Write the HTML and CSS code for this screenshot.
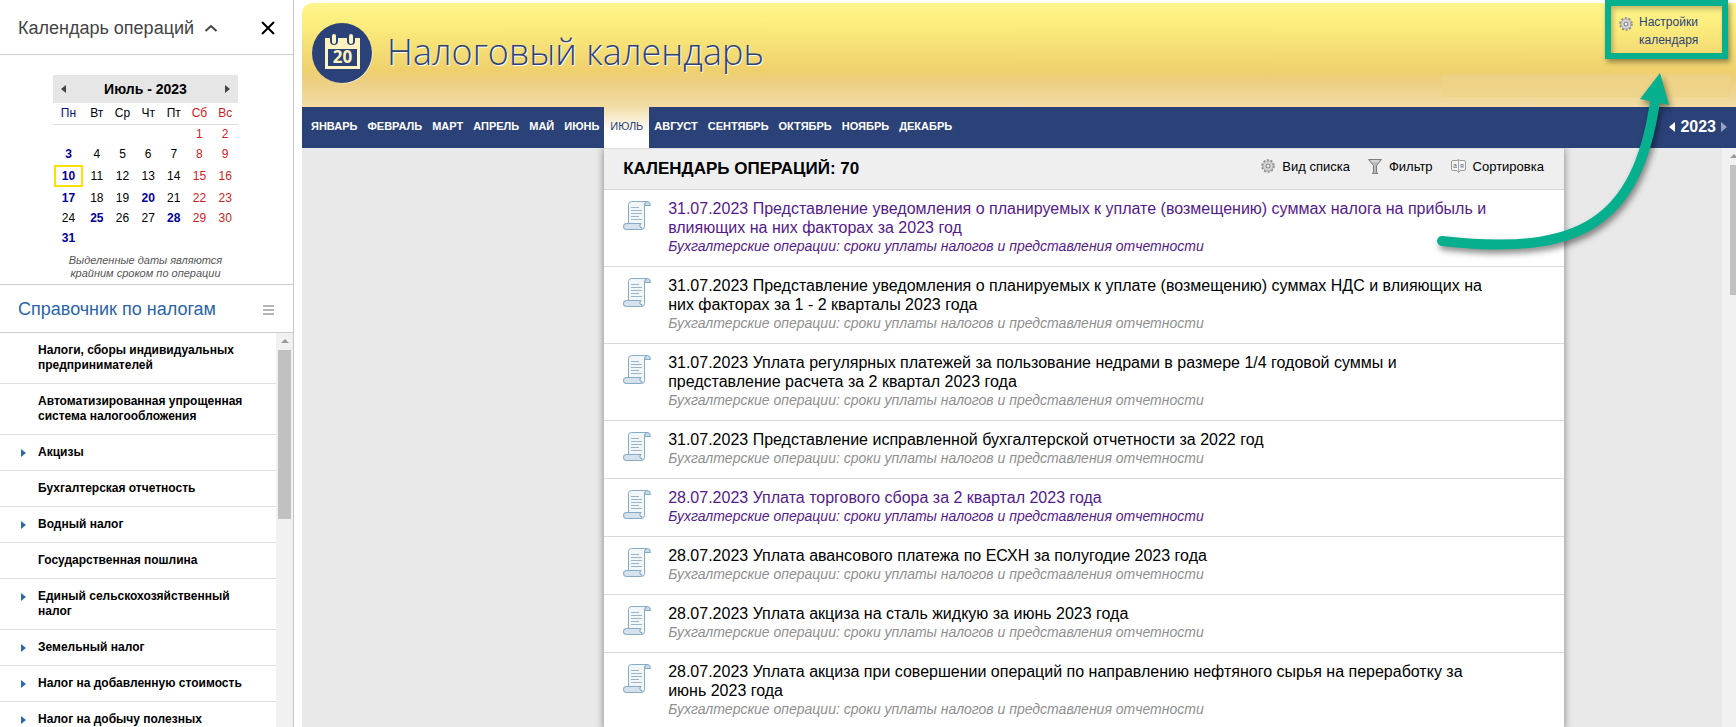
FILE: index.html
```html
<!DOCTYPE html>
<html lang="ru">
<head>
<meta charset="utf-8">
<title>Налоговый календарь</title>
<link rel="stylesheet" href="styles.css">
</head>
<body>
<svg class="defs" aria-hidden="true">
  <symbol id="scroll" viewBox="0 0 28 29">
    <path d="M5.500 22V3.500Q5.500.5 8.500.5H24.500Q21.500 1 21.500 4V25.500Q21.500 28.500 18.500 28.500H3.500Q.5 28.500.5 25.500 .5 22.500 3.500 22.500H18Q16 24 17 25.500" fill="#f2f6f9" stroke="#86abc4"/>
    <path d="M22 4.500H27.500Q27.500.5 24.500.5 21.500.5 21.500 4.500Z" fill="#c9dae6" stroke="#86abc4"/>
    <path d="M3.500 22.500H18Q15.500 24 17.500 26.500H19Q19 28.500 17.500 28.500H3.500Q.5 28.500.5 25.500T3.500 22.500Z" fill="#d5e2eb" stroke="#86abc4"/>
    <path d="M8 6.500H16M8 9.500H19M8 12.500H19M8 15.500H16M8 18.500H19" stroke="#9cb6c8"/>
  </symbol>
  <symbol id="gear" viewBox="0 0 14 14">
    <circle cx="7" cy="7" r="5.800" fill="#d8d8d8" stroke="#8b8b8b" stroke-width="2" stroke-dasharray="2 1.640"/>
    <circle cx="7" cy="7" r="5" fill="#d6d6d6" stroke="#a5a5a5" stroke-width=".8"/>
    <circle cx="7" cy="7" r="2" fill="#f4f4f4" stroke="#777"/>
  </symbol>
</svg>
<div class="app">
  <aside class="side">
    <header class="side-head">
      <button class="side-title" type="button">Календарь операций
        <svg width="14" height="8" viewBox="0 0 14 8"><path d="M1.500 7 7 2 12.500 7" fill="none" stroke="#444" stroke-width="2"/></svg>
      </button>
      <button class="icon-btn" type="button" aria-label="Закрыть"><svg width="14" height="14" viewBox="0 0 14 14"><path d="M1 1 13 13M13 1 1 13" stroke="#000" stroke-width="2"/></svg></button>
    </header>
    <section class="cal">
      <div class="cal-head">
        <button class="icon-btn" type="button" aria-label="Предыдущий месяц"><svg width="5" height="8"><path d="M5 0V8L0 4Z" fill="#444"/></svg></button>
        <strong>Июль - 2023</strong>
        <button class="icon-btn" type="button" aria-label="Следующий месяц"><svg width="5" height="8"><path d="M0 0V8L5 4Z" fill="#444"/></svg></button>
      </div>
      <table class="days">
        <thead><tr><th class="mon">Пн</th><th>Вт</th><th>Ср</th><th>Чт</th><th>Пт</th><th>Сб</th><th>Вс</th></tr></thead>
        <tbody>
          <tr><td></td><td></td><td></td><td></td><td></td><td>1</td><td>2</td></tr>
          <tr><td class="due">3</td><td>4</td><td>5</td><td>6</td><td>7</td><td>8</td><td>9</td></tr>
          <tr class="now"><td class="due today">10</td><td>11</td><td>12</td><td>13</td><td>14</td><td>15</td><td>16</td></tr>
          <tr><td class="due">17</td><td>18</td><td>19</td><td class="due">20</td><td>21</td><td>22</td><td>23</td></tr>
          <tr><td>24</td><td class="due">25</td><td>26</td><td>27</td><td class="due">28</td><td>29</td><td>30</td></tr>
          <tr><td class="due">31</td><td></td><td></td><td></td><td></td><td></td><td></td></tr>
        </tbody>
      </table>
      <p class="cal-note">Выделенные даты являются крайним сроком по операции</p>
    </section>
    <header class="side-head ref-head">
      <h2>Справочник по налогам</h2>
      <button class="icon-btn" type="button" aria-label="Меню"><svg width="11" height="10"><path d="M0 1H11M0 5H11M0 9H11" stroke="#b5b5b5" stroke-width="2"/></svg></button>
    </header>
    <div class="ref">
      <ul class="ref-list">
        <li><a href="#">Налоги, сборы индивидуальных предпринимателей</a></li>
        <li><a href="#">Автоматизированная упрощенная система налогообложения</a></li>
        <li class="more"><a href="#">Акцизы</a></li>
        <li><a href="#">Бухгалтерская отчетность</a></li>
        <li class="more"><a href="#">Водный налог</a></li>
        <li><a href="#">Государственная пошлина</a></li>
        <li class="more"><a href="#">Единый сельскохозяйственный налог</a></li>
        <li class="more"><a href="#">Земельный налог</a></li>
        <li class="more"><a href="#">Налог на добавленную стоимость</a></li>
        <li class="more"><a href="#">Налог на добычу полезных</a></li>
      </ul>
      <div class="bar"><i class="bar-up"></i><i class="bar-thumb"></i></div>
    </div>
  </aside>

  <main class="main">
    <header class="top">
      <svg class="logo" width="61" height="61" viewBox="0 0 61 61">
        <circle cx="31" cy="31" r="29.500" fill="#fff" opacity=".8"/>
        <circle cx="30" cy="30" r="30" fill="#2b4279"/>
        <path fill="#fff3c0" fill-rule="evenodd" d="M13 15H18V18Q18 22 22 22T26 18V15H35V18Q35 22 39 22T43 18V15H48V46H13ZM16 26V43H45V26Z"/>
        <rect x="20" y="11" width="4" height="10" rx="2" fill="#fff3c0"/>
        <rect x="37" y="11" width="4" height="10" rx="2" fill="#fff3c0"/>
        <text x="30.500" y="40" class="logo-day">20</text>
      </svg>
      <h1>Налоговый календарь</h1>
      <a class="settings" href="#"><svg width="14" height="14"><use href="#gear"/></svg><span>Настройки календаря</span></a>
    </header>
    <nav class="months">
      <a href="#">Январь</a><a href="#">Февраль</a><a href="#">Март</a><a href="#">Апрель</a><a href="#">Май</a><a href="#">Июнь</a><a href="#" class="on" aria-current="page">Июль</a><a href="#">Август</a><a href="#">Сентябрь</a><a href="#">Октябрь</a><a href="#">Ноябрь</a><a href="#">Декабрь</a>
      <div class="year">
        <button class="icon-btn" type="button" aria-label="Предыдущий год"><svg width="6" height="10"><path d="M6 0V10L0 5Z" fill="#fff"/></svg></button>
        <strong>2023</strong>
        <button class="icon-btn" type="button" aria-label="Следующий год"><svg width="6" height="10"><path d="M0 0V10L6 5Z" fill="#97a3bf"/></svg></button>
      </div>
    </nav>
    <div class="body">
      <section class="panel">
        <header class="panel-head">
          <h2>КАЛЕНДАРЬ ОПЕРАЦИЙ: 70</h2>
          <button class="tool" type="button"><svg width="14" height="14"><use href="#gear"/></svg>Вид списка</button>
          <button class="tool" type="button"><svg width="14" height="15" viewBox="0 0 14 15"><path d="M.5.5H13.500L8.500 6.500V13.500L10 14.500H4L5.500 13.500V6.500Z" fill="#bcbcbc" stroke="#7d7d7d"/><path d="M3 2H11" stroke="#eee"/></svg>Фильтр</button>
          <button class="tool" type="button"><svg width="15" height="14" viewBox="0 0 15 14"><path d="M2 1.500H6L7.500.5 9 1.500H13Q14.500 1.500 14.500 3V10Q14.500 11.500 13 11.500H9L7.500 13.500 6 11.500H2Q.5 11.500.5 10V3Q.5 1.500 2 1.500Z" fill="#f6f6f6" stroke="#9a9a9a"/><path d="M7.500 1V13" stroke="#aaa"/><text x="2" y="9" class="mini">а</text><text x="9" y="9" class="mini">я</text></svg>Сортировка</button>
        </header>
        <ul class="ops">
          <li class="seen"><svg width="28" height="29"><use href="#scroll"/></svg><a href="#">31.07.2023 Представление уведомления о планируемых к уплате (возмещению) суммах налога на прибыль и влияющих на них факторах за 2023 год<em>Бухгалтерские операции: сроки уплаты налогов и представления отчетности</em></a></li>
          <li><svg width="28" height="29"><use href="#scroll"/></svg><a href="#">31.07.2023 Представление уведомления о планируемых к уплате (возмещению) суммах НДС и влияющих на них факторах за 1 - 2 кварталы 2023 года<em>Бухгалтерские операции: сроки уплаты налогов и представления отчетности</em></a></li>
          <li><svg width="28" height="29"><use href="#scroll"/></svg><a href="#">31.07.2023 Уплата регулярных платежей за пользование недрами в размере 1/4 годовой суммы и представление расчета за 2 квартал 2023 года<em>Бухгалтерские операции: сроки уплаты налогов и представления отчетности</em></a></li>
          <li><svg width="28" height="29"><use href="#scroll"/></svg><a href="#">31.07.2023 Представление исправленной бухгалтерской отчетности за 2022 год<em>Бухгалтерские операции: сроки уплаты налогов и представления отчетности</em></a></li>
          <li class="seen"><svg width="28" height="29"><use href="#scroll"/></svg><a href="#">28.07.2023 Уплата торгового сбора за 2 квартал 2023 года<em>Бухгалтерские операции: сроки уплаты налогов и представления отчетности</em></a></li>
          <li><svg width="28" height="29"><use href="#scroll"/></svg><a href="#">28.07.2023 Уплата авансового платежа по ЕСХН за полугодие 2023 года<em>Бухгалтерские операции: сроки уплаты налогов и представления отчетности</em></a></li>
          <li><svg width="28" height="29"><use href="#scroll"/></svg><a href="#">28.07.2023 Уплата акциза на сталь жидкую за июнь 2023 года<em>Бухгалтерские операции: сроки уплаты налогов и представления отчетности</em></a></li>
          <li><svg width="28" height="29"><use href="#scroll"/></svg><a href="#">28.07.2023 Уплата акциза при совершении операций по направлению нефтяного сырья на переработку за июнь 2023 года<em>Бухгалтерские операции: сроки уплаты налогов и представления отчетности</em></a></li>
        </ul>
      </section>
      <div class="bar bar-main"><i class="bar-up"></i><i class="bar-thumb"></i></div>
    </div>
    <svg class="arrow" width="250" height="200" viewBox="0 0 250 200" aria-hidden="true">
      <path d="M11 169C150 185 206 150 224 30" fill="none" stroke="#06b08f" stroke-width="10" stroke-linecap="round"/>
      <path d="M229 1 209 27 238 33Z" fill="#06b08f"/>
    </svg>
  </main>
</div>
</body>
</html>
```

FILE: styles.css
```css
* { box-sizing: border-box; }
body { margin: 0; height: 100vh; overflow: hidden; background: #fff; color: #000; font-family: "Liberation Sans", Arial, sans-serif; }
h1, h2, p, ul { margin: 0; padding: 0; font-weight: normal; }
ul { list-style: none; }
a { color: inherit; text-decoration: none; }
button { padding: 0; border: 0; background: none; color: inherit; font: inherit; cursor: pointer; }
svg { flex: none; display: block; }
.defs { position: absolute; width: 0; height: 0; }
.icon-btn { display: flex; }
.app { display: flex; height: 100vh; }

.side { display: flex; flex-direction: column; flex: none; width: 294px; margin-right: 8px; border-right: 1px solid #c6c6c6; }
.side-head { display: flex; flex: none; align-items: center; justify-content: space-between; height: 55px; padding: 2px 18px 0; border-bottom: 1px solid #ccc; }
.side-title { display: flex; align-items: center; gap: 10px; color: #444; font-size: 18px; }
.ref-head { height: 48px; padding-right: 19px; color: #2a64a8; }
.ref-head h2 { font-size: 18px; }
.cal { flex: none; padding: 20px 55px 4px 53px; border-bottom: 1px solid #ccc; }
.cal-head { display: flex; align-items: center; justify-content: space-between; height: 28px; padding: 0 8px; background: #e6e6e6; font-size: 14px; }
.days { width: 100%; border-collapse: collapse; font-size: 12px; text-align: center; table-layout: fixed; }
.days th { height: 21px; padding: 0; border-bottom: 1px solid #ddd; font-weight: normal; }
.days td { height: 20px; padding: 0; }
.days .now td { height: 24px; }
.days th:nth-child(n+6), .days td:nth-child(n+6) { color: #cf1b22; }
.days .mon { width: 31px; color: #0a0a78; }
.days .due { color: #00009c; font-weight: bold; }
.days .today { outline: 2px solid #ffe100; outline-offset: -3px; }
.cal-note { padding-top: 6px; color: #555; font-size: 11px; font-style: italic; line-height: 13px; text-align: center; }
.ref { display: flex; flex: 1; min-height: 0; overflow: hidden; }
.ref-list { flex: 1; font-size: 12px; font-weight: bold; line-height: 15px; }
.ref-list li { position: relative; padding: 10px 12px 10px 38px; border-bottom: 1px solid #e2e2e2; }
.ref-list .more::before { content: ""; position: absolute; left: 21px; top: 14px; border: 4px solid transparent; border-left: 5px solid #2a6ab0; border-right: 0; }
.bar { display: flex; flex-direction: column; flex: none; align-items: center; gap: 7px; width: 17px; padding-top: 6px; background: #f1f1f1; }
.bar-up { border: 4px solid transparent; border-bottom-color: #9a9a9a; border-top: 0; }
.bar-thumb { width: 13px; height: 169px; background: #c1c1c1; }

.main { position: relative; display: flex; flex: 1; flex-direction: column; min-width: 0; padding-top: 3px; }
.top { display: flex; flex: none; height: 104px; padding: 20px 8px 0 10px; border-radius: 10px 0 0 0; background: linear-gradient(#edd185, #efd48c) right 6px top 72px / 288px 22px no-repeat, linear-gradient(#fff48c 0, #fcee7e 20%, #efd06d 65%, #edcf80 75%, #f2dda6 100%); }
.logo-day { fill: #fff3c0; font: bold 17px "Open Sans", sans-serif; text-anchor: middle; }
.top h1 { margin-left: 14px; color: #2b4279; font-family: "Open Sans", sans-serif; font-size: 36px; font-weight: 300; line-height: 58px; text-shadow: 1px 1px 0 #fff; white-space: nowrap; }
.settings { display: flex; gap: 6px; width: 123px; height: 59px; margin: -23px 0 0 auto; padding: 7px 8px; border: 6px solid #06b08f; color: #2b4279; font-size: 12px; line-height: 18px; box-shadow: 2px 3px 5px rgb(0 0 0 / 40%), inset 2px 3px 5px rgb(0 0 0 / 25%); }
.settings svg { margin-top: 4px; }
.months { display: flex; flex: none; height: 41px; padding: 0 9px 0 4px; background: #2b4279; color: #fff; font-size: 11px; font-weight: bold; line-height: 38px; text-transform: uppercase; }
.months a { padding: 0 5px; }
.months .on { background: linear-gradient(#f2dda6, #fff 60%); color: #2b4279; font-weight: normal; }
.months .on { padding: 0 6px; }
.year { display: flex; align-items: center; gap: 5px; margin-left: auto; padding-bottom: 2px; font-size: 16px; }
.body { display: grid; flex: 1; grid-template-columns: 21% minmax(0, 1fr) 11% 1%; min-height: 0; overflow: hidden; background: #e9e9e9; }
.panel { grid-column: 2; margin-left: 1px; background: #fff; box-shadow: 0 0 8px rgb(0 0 0 / 45%); }
.panel-head { display: flex; align-items: center; gap: 18px; height: 42px; padding: 0 20px 0 19px; border-top: 1px solid #ddd; border-bottom: 1px solid #d9d9d9; background: #efefef; }
.panel-head h2 { flex: 1; font-size: 17px; font-weight: bold; }
.tool { display: flex; align-items: center; gap: 7px; padding-bottom: 6px; font-size: 13px; }
.mini { fill: #666; font-size: 7px; }
.ops li { display: flex; gap: 17px; padding: 9px 64px 10px 19px; border-bottom: 1px solid #d9d9d9; font-size: 16px; line-height: 19px; }
.ops svg { margin-top: 2px; }
.ops em { display: block; color: #8f8f8f; font-size: 14px; }
.ops .seen, .ops .seen em { color: #551a8b; }
.bar-main { grid-column: 4; align-items: flex-start; padding-left: 8px; width: auto; }
.bar-main .bar-thumb { height: 130px; }
.arrow { position: absolute; right: 55px; top: 72px; filter: drop-shadow(2px 4px 3px rgb(0 0 0 / 45%)); }
```
